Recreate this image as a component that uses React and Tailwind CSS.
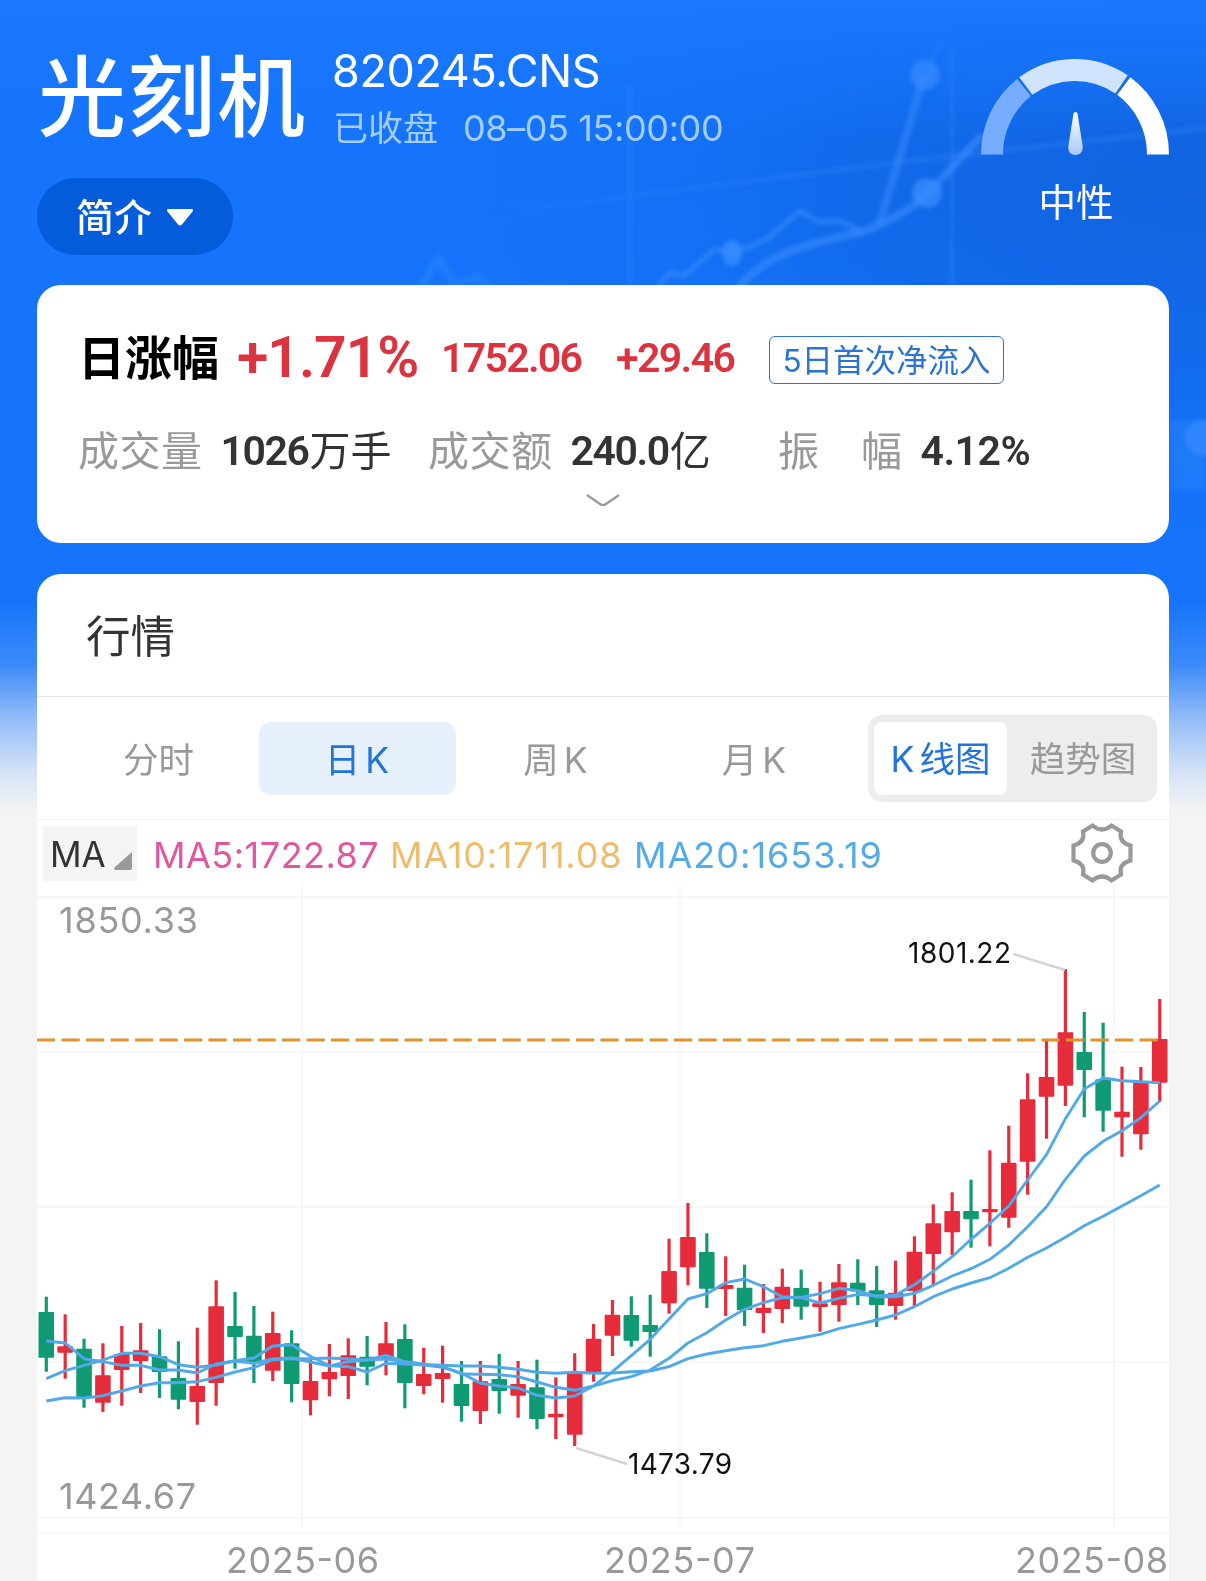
import { useState } from "react";

// [high, body top, body bottom, low, direction] in chart units
const CANDLES = [
  [1296.7, 1312, 1357.7, 1371.7, "down"],
  [1314.3, 1346.3, 1352.7, 1378.7, "up"],
  [1338.7, 1348.7, 1397.3, 1407.7, "down"],
  [1343.3, 1375.3, 1402.7, 1412, "up"],
  [1326, 1354, 1370, 1405.7, "up"],
  [1323, 1350.3, 1361, 1393, "up"],
  [1329.3, 1356.3, 1372, 1398, "down"],
  [1341.3, 1378, 1399.7, 1409.3, "down"],
  [1327.7, 1386, 1402, 1424.7, "up"],
  [1280.3, 1306.3, 1383, 1405.7, "up"],
  [1292, 1326, 1337, 1368.7, "down"],
  [1306, 1335.7, 1363.3, 1383, "down"],
  [1311.7, 1333, 1370.7, 1381, "up"],
  [1330.3, 1343.3, 1384, 1402.3, "down"],
  [1360, 1381, 1400.3, 1415.3, "up"],
  [1344, 1372, 1379.3, 1396.3, "up"],
  [1338.3, 1355.3, 1376, 1399, "up"],
  [1336, 1356.7, 1366.7, 1385.3, "down"],
  [1322, 1343.3, 1360, 1375.3, "up"],
  [1324.3, 1339, 1383, 1408.3, "down"],
  [1347.7, 1374, 1386, 1394.3, "up"],
  [1345.7, 1373, 1379, 1402.7, "up"],
  [1361, 1384, 1406, 1421.7, "down"],
  [1361, 1381.3, 1411, 1424, "up"],
  [1354, 1379, 1391, 1413.7, "down"],
  [1361, 1384, 1395.7, 1417.7, "up"],
  [1359.7, 1387.3, 1419, 1429, "down"],
  [1377.3, 1413.7, 1417.3, 1439, "up"],
  [1353.3, 1373, 1434.7, 1446, "up"],
  [1324, 1338.7, 1372.3, 1381.7, "up"],
  [1300, 1314.7, 1335.7, 1356, "up"],
  [1296.3, 1315, 1340.7, 1346.7, "down"],
  [1294.7, 1325, 1332, 1356.7, "down"],
  [1238.7, 1271, 1303.3, 1313.7, "up"],
  [1203, 1237, 1267.3, 1285.3, "up"],
  [1233.3, 1252, 1288.7, 1308, "down"],
  [1256.3, 1285, 1289, 1316, "up"],
  [1264.7, 1287.7, 1310, 1326, "down"],
  [1284, 1307.7, 1313, 1333, "up"],
  [1268.7, 1286.7, 1309, 1323, "up"],
  [1269.7, 1288, 1306.7, 1319.7, "down"],
  [1281.7, 1303.3, 1307, 1331.7, "up"],
  [1264, 1282.3, 1305, 1321.7, "up"],
  [1259.3, 1282.7, 1291.3, 1305, "down"],
  [1266, 1290.3, 1305, 1327, "down"],
  [1260.7, 1292.7, 1306, 1319.7, "up"],
  [1236.3, 1251.7, 1291, 1306, "up"],
  [1204.3, 1223.3, 1254, 1285, "up"],
  [1192.3, 1211, 1232.3, 1255, "up"],
  [1179.7, 1211, 1219.3, 1247.7, "down"],
  [1150.3, 1209, 1212.3, 1246.3, "up"],
  [1125.7, 1162.7, 1217.7, 1227.7, "up"],
  [1073.3, 1099.3, 1161.7, 1194.7, "up"],
  [1040, 1077, 1096.7, 1138.7, "up"],
  [969, 1032.3, 1085.7, 1106, "up"],
  [1012, 1052, 1070, 1117.3, "down"],
  [1022.7, 1079.3, 1110.7, 1131.7, "down"],
  [1066.7, 1111.7, 1117.3, 1156.7, "up"],
  [1067, 1082.7, 1134.3, 1149.7, "up"],
  [999, 1039, 1082.7, 1101.7, "up"],
];

const MA5 = [
  1341, 1343, 1358.7, 1361.7, 1365.3, 1365.3, 1370, 1370, 1373, 1364, 1360.7,
  1358, 1346, 1344.7, 1356.3, 1365.7, 1366.7, 1372, 1363.3, 1364, 1365, 1367.3,
  1373, 1383.3, 1386, 1388, 1395.3, 1398, 1396, 1386, 1371.7, 1355.7, 1339.3,
  1319, 1299, 1293.7, 1282.7, 1279, 1286.7, 1296.7, 1297.7, 1303, 1298.3,
  1294.3, 1296, 1295, 1284.7, 1271.3, 1256.7, 1239.3, 1223.3, 1206, 1180,
  1154.7, 1118.7, 1089, 1078, 1080.7, 1081.7, 1082.7,
];

const MA10 = [
  1378.7, 1370.7, 1365.3, 1360, 1353.3, 1353.3, 1356.7, 1364.7, 1367.3, 1365,
  1361, 1363.3, 1359, 1358, 1362, 1366, 1361.7, 1360, 1355.3, 1361.7, 1364,
  1366.7, 1374, 1374.3, 1374.7, 1376.7, 1382, 1387.3, 1390.3, 1386, 1380.7,
  1376.7, 1370, 1358.3, 1343, 1332.7, 1320, 1309.3, 1302.7, 1297.7, 1297.3,
  1293.7, 1288.3, 1290.7, 1296.7, 1296.7, 1293.3, 1285.3, 1276, 1268.7, 1259.3,
  1245, 1226.7, 1206.7, 1179.3, 1156, 1141.3, 1130.7, 1117.7, 1101,
];

const MA20 = [
  1401, 1397.7, 1398, 1395.7, 1391, 1386, 1382.7, 1382.7, 1381.7, 1377.3, 1372,
  1367.7, 1359.7, 1358.7, 1358.7, 1358, 1359, 1360, 1359, 1361.7, 1364.7,
  1365.3, 1366, 1366, 1367.3, 1369.3, 1372.3, 1373.3, 1372.3, 1373.3, 1373,
  1371.7, 1371, 1366.7, 1358.7, 1354, 1350.7, 1347.7, 1345.7, 1341.3, 1338,
  1334.3, 1328.7, 1324.3, 1320, 1315, 1306.7, 1296.7, 1289, 1283, 1277.7,
  1268.3, 1257.3, 1248, 1237.3, 1225.7, 1216.3, 1206, 1195.7, 1185,
];

const candleX = (i) => 46.3 + i * 18.872;
const toPoints = (values) => values.map((y, i) => `${candleX(i)},${y}`).join(" ");

function HeaderBackdrop() {
  return (
    <div className="absolute inset-x-0 top-0 h-[812px] bg-[#1574fb]">
      <svg className="w-full h-full" viewBox="0 0 1206 812" fill="none">
        <defs>
          <radialGradient id="shade" cx="0.99" cy="0.3" r="0.64">
            <stop offset="0" stopColor="#1163df" />
            <stop offset="0.45" stopColor="#1168e8" stopOpacity="0.85" />
            <stop offset="1" stopColor="#1574fb" stopOpacity="0" />
          </radialGradient>
          <linearGradient id="top" x1="0" y1="0" x2="0" y2="1">
            <stop offset="0" stopColor="#1978ff" />
            <stop offset="1" stopColor="#1978ff" stopOpacity="0" />
          </linearGradient>
          <linearGradient id="line" x1="480" y1="0" x2="760" y2="0" gradientUnits="userSpaceOnUse">
            <stop offset="0" stopColor="#3b8dff" stopOpacity="0" />
            <stop offset="1" stopColor="#3b8dff" />
          </linearGradient>
          <linearGradient id="fade" x1="0" y1="0" x2="0" y2="1">
            <stop offset="0" stopColor="#f4f4f5" stopOpacity="0" />
            <stop offset="0.3" stopColor="#f4f4f5" stopOpacity="0.17" />
            <stop offset="0.55" stopColor="#f4f4f5" stopOpacity="0.55" />
            <stop offset="0.8" stopColor="#f4f4f5" stopOpacity="0.85" />
            <stop offset="1" stopColor="#f4f4f5" />
          </linearGradient>
          <filter id="soft" x="-5%" y="-5%" width="110%" height="110%">
            <feGaussianBlur stdDeviation="2" />
          </filter>
        </defs>
        <rect width="1206" height="600" fill="url(#shade)" />
        <rect width="1206" height="140" fill="url(#top)" />
        <g filter="url(#soft)" stroke="#3b8dff" strokeLinejoin="round">
          <path d="M630 85V290M952 50V290" strokeWidth="4" opacity="0.28" />
          <path d="M480 215L603 200L900 162L1206 128" stroke="url(#line)" strokeWidth="5" opacity="0.28" />
          <path d="M420 290L438 258L456 286L478 276L492 292" strokeWidth="9" opacity="0.3" />
          <path
            d="M658 286L670 273L684 276L715 249L732 252L752 246L768 238L800 211L820 222L840 221L862 232"
            strokeWidth="5"
            opacity="0.6"
          />
          <path
            d="M736 290C765 255 800 245 862 232C895 220 915 205 928 193L982 135"
            strokeWidth="8"
            opacity="0.6"
          />
          <path d="M879 225L924 76" strokeWidth="8" opacity="0.5" />
          <path d="M924 76L942 42" strokeWidth="7" opacity="0.15" />
        </g>
        <g filter="url(#soft)" fill="#3b8dff">
          <circle cx="925" cy="75" r="15" opacity="0.65" />
          <circle cx="927" cy="193" r="15" opacity="0.75" />
          <ellipse cx="732" cy="253" rx="10" ry="13" opacity="0.8" />
          <circle cx="1203" cy="438" r="18" opacity="0.6" />
          <path d="M1170 420H1206V490H1170Z" opacity="0.3" />
        </g>
        <rect y="600" width="1206" height="212" fill="url(#fade)" />
      </svg>
    </div>
  );
}

function SentimentGauge() {
  return (
    <svg className="w-[190px] h-[98px] shrink-0" viewBox="980 58 190 98" fill="none">
      <defs>
        <linearGradient id="needle" x1="0" y1="0" x2="0" y2="1">
          <stop offset="0" stopColor="#ffffff" />
          <stop offset="1" stopColor="#a9c8fb" />
        </linearGradient>
      </defs>
      <path d="M992 154.500A83.500 84.500 0 0 1 1024 87.500" stroke="#76adff" strokeWidth="22" />
      <path d="M1025.800 86A83.500 84.500 0 0 1 1121.500 84.300" stroke="#d1e4fe" strokeWidth="22" />
      <path d="M1123.800 86A83.500 84.500 0 0 1 1158 154.500" stroke="#ffffff" strokeWidth="22" />
      <path
        d="M1075.500 112C1073.500 112 1073.200 114 1072.800 118L1068.500 145C1067.300 151 1070.500 155 1075.500 155C1080.500 155 1083.700 151 1082.500 145L1078.200 118C1077.800 114 1077.500 112 1075.500 112Z"
        fill="url(#needle)"
      />
    </svg>
  );
}

function GearIcon() {
  return (
    <svg
      className="w-[64px] h-[64px]"
      viewBox="-32 -32 64 64"
      fill="none"
      stroke="#999999"
      strokeWidth="4.200"
      strokeLinejoin="miter"
    >
      <path d="M-9.500 -27.500Q0 -19.500 9.500 -27.500L19 -21.500Q16.500 -10.500 28.500 -7.500V7.500Q16.500 10.500 19 21.500L9.500 27.500Q0 19.500 -9.500 27.500L-19 21.500Q-16.500 10.500 -28.500 7.500V-7.500Q-16.500 -10.500 -19 -21.500Z" />
      <circle r="8.800" />
    </svg>
  );
}

function KLineChart() {
  return (
    <svg className="block w-[1132px] h-[696px]" viewBox="37 885 1132 696" fill="none">
      <g stroke="#f6f6f7" strokeWidth="1.500">
        <path d="M37 897H1169M37 1052H1169M37 1207H1169M37 1362H1169M37 1518H1169M37 1533H1169" />
        <path d="M302 885V1528M680 885V1528M1114 885V1528" />
      </g>

      {CANDLES.map(([high, top, bottom, low, dir], i) => {
        const color = dir === "up" ? "#e62c3b" : "#0f9a74";
        return (
          <g key={i} fill={color}>
            <rect x={candleX(i) - 1.6} y={high} width="3.2" height={low - high} />
            <rect x={candleX(i) - 7.8} y={top} width="15.6" height={bottom - top} rx="1" />
          </g>
        );
      })}

      {/* Latest price */}
      <path d="M37 1040H1160" stroke="#e0922c" strokeWidth="3" strokeDasharray="18.2 6.3" />

      <g stroke="#51a9e8" strokeWidth="2.900" strokeLinejoin="round">
        <polyline points={toPoints(MA20)} />
        <polyline points={toPoints(MA10)} />
        <polyline points={toPoints(MA5)} />
      </g>

      <g stroke="#d4d4d4" strokeWidth="2.500">
        <path d="M1013 954L1065 970" />
        <path d="M576 1448L627 1464" />
      </g>

      <g fontFamily="Inter, sans-serif">
        <g fontSize="28" fill="#111111">
          <text x="908" y="963" textLength="103">1801.22</text>
          <text x="628" y="1474" textLength="104">1473.79</text>
        </g>
        <g fontSize="36" fill="#999999">
          <text x="59" y="933" textLength="139">1850.33</text>
          <text x="59" y="1509" textLength="137">1424.67</text>
          <text x="226" y="1573" textLength="153">2025-06</text>
          <text x="604" y="1573" textLength="151">2025-07</text>
          <text x="1015" y="1573" textLength="153">2025-08</text>
        </g>
      </g>
    </svg>
  );
}

function Stat({ label, value, unit }) {
  return (
    <div className="flex items-center whitespace-pre">
      <span className="text-[#999999] tracking-[0.5px]">{label}</span>
      <span
        className={`ml-[18px] font-[Roboto] font-semibold text-[#333333] ${
          unit ? "tracking-[-1.4px]" : "tracking-[-0.5px]"
        }`}
      >
        {value}
      </span>
      <span className="ml-px text-[#333333]">{unit}</span>
    </div>
  );
}

const TABS = ["分时", "日 K", "周 K", "月 K"];

export default function App() {
  const [tab, setTab] = useState("日 K");
  const [mode, setMode] = useState("K 线图");

  return (
    <div className="relative w-[1206px] h-[1581px] overflow-hidden bg-[#f4f4f5] font-['Inter','Noto_Sans_CJK_SC',sans-serif]">
      <HeaderBackdrop />

      <div className="relative px-[37px]">
        {/* Header */}
        <header className="h-[285px] flex justify-between">
          <div>
            <div className="flex pt-[42px]">
              <h1 className="w-[296px] pl-px text-[88px] leading-[110px] tracking-[1.5px] font-medium text-white whitespace-nowrap">
                光刻机
              </h1>
              <div className="pt-[2px] whitespace-nowrap">
                <div className="-ml-px text-[45px] leading-[54px] tracking-[-0.4px] text-white">
                  820245.CNS
                </div>
                <div className="flex items-center mt-[2px] leading-[56px] text-[#a3ccff]">
                  <span className="text-[35px]">已收盘</span>
                  <span className="ml-[25px] text-[36px] tracking-[-0.4px]">08–05 15:00:00</span>
                </div>
              </div>
            </div>
            <button className="mt-[22px] w-[196px] h-[77px] rounded-full bg-[#055cda] flex items-center pl-[39px] pt-px text-white text-[38px] font-medium">
              简介
              <svg className="ml-[15px] w-[26px] h-[17px]" viewBox="0 0 26 17" fill="currentColor">
                <path d="M2 0H24Q27 0 25.500 2.500L15 15.500Q13 17.500 11 15.500L0.500 2.500Q-1 0 2 0Z" />
              </svg>
            </button>
          </div>
          <div className="w-[189px] pt-[58px] flex flex-col items-center">
            <SentimentGauge />
            <span className="mt-[20px] pl-[3px] text-[37.5px] leading-[53px] text-white">中性</span>
          </div>
        </header>

        {/* Summary card */}
        <section className="h-[258px] rounded-[24px] bg-white flex flex-col whitespace-nowrap">
          <div className="mt-[38px] ml-[41px] h-[70px] flex items-center">
            <span className="w-[159px] text-[47px] font-bold text-black">日涨幅</span>
            <span className="w-[204px] font-[Roboto] text-[57px] leading-[60px] font-semibold tracking-[-1px] text-[#dc3340]">
              +1.71%
            </span>
            <span className="mt-px w-[175px] font-[Roboto] text-[41px] font-semibold tracking-[-1.7px] text-[#dc3340]">
              1752.06
            </span>
            <span className="mt-px w-[153px] font-[Roboto] text-[41px] font-semibold tracking-[-1.6px] text-[#dc3340]">
              +29.46
            </span>
            <span className="mt-[4px] w-[235px] h-[48px] rounded-[6px] border border-[#2a73d4] flex items-center justify-center pt-px text-[31.5px] text-[#2a73d4]">
              5日首次净流入
            </span>
          </div>
          <div className="mt-[29px] ml-[41px] h-[60px] flex items-center text-[41px]">
            <div className="w-[350px]">
              <Stat label="成交量" value="1026" unit="万手" />
            </div>
            <div className="w-[350px]">
              <Stat label="成交额" value="240.0" unit="亿" />
            </div>
            <Stat label="振　幅" value="4.12%" />
          </div>
          <svg className="mx-auto mt-[11px] w-[34px] h-[16px]" viewBox="0 0 34 16" fill="none">
            <path d="M1 2L14 11Q17 13 20 11L33 2" stroke="#999999" strokeWidth="2.200" />
          </svg>
        </section>

        {/* Quote card */}
        <section className="mt-[31px] h-[1007px] rounded-t-[24px] bg-white overflow-hidden whitespace-nowrap">
          <h2 className="h-[123px] pl-[49px] pt-[5px] border-b border-[#e6e6e8] flex items-center text-[44.5px] text-[#333333]">
            行情
          </h2>

          <div className="h-[123px] flex items-center border-b border-[#f3f3f4] pl-[23px] pr-3">
            <div className="flex gap-[1.5px] shrink-0">
              {TABS.map((name) => (
                <button
                  key={name}
                  onClick={() => setTab(name)}
                  className={`w-[197px] h-[73px] mt-px pt-[4px] rounded-[12px] text-[35.5px] [word-spacing:-5px] shrink-0 ${
                    tab === name ? "bg-[#e6f1fd] text-[#2273dc]" : "text-[#999999]"
                  }`}
                >
                  {name}
                </button>
              ))}
            </div>
            <div className="ml-auto w-[289px] h-[87px] rounded-[14px] bg-[#ededed] py-[7px] px-[6px] flex shrink-0">
              {["K 线图", "趋势图"].map((name) => (
                <button
                  key={name}
                  onClick={() => setMode(name)}
                  className={`h-[73px] pt-[4px] rounded-[8px] text-[35.5px] [word-spacing:-5px] ${
                    mode === name
                      ? "w-[133px] bg-white text-[#2273dc]"
                      : "flex-1 pl-[8px] text-[#999999]"
                  }`}
                >
                  {name}
                </button>
              ))}
            </div>
          </div>

          {/* Moving averages */}
          <div className="h-[65px] flex items-center pl-[6px] pr-[35px] text-[36px]">
            <button className="mt-[2px] w-[94px] h-[55px] bg-[#f4f4f4] pl-[7px] pt-[2px] flex items-center text-[35px] text-[#333333]">
              MA
              <svg className="ml-[8px] mt-[13px] w-[18px] h-[18px]" viewBox="0 0 18 18">
                <path d="M18 0V16Q18 18 16 18H2Q-1 18 1 15Z" fill="#999999" />
              </svg>
            </button>
            <span className="mt-[4px] w-[237px] pl-[16px] tracking-[0.5px] text-[#e0589f]">
              MA5:1722.87
            </span>
            <span className="mt-[4px] w-[245px] pl-[16px] tracking-[0.8px] text-[#eebd6c]">
              MA10:1711.08
            </span>
            <span className="mt-[4px] pl-[15px] tracking-[1px] text-[#55abe6]">MA20:1653.19</span>
            <button className="ml-auto">
              <GearIcon />
            </button>
          </div>

          <KLineChart />
        </section>
      </div>
    </div>
  );
}
